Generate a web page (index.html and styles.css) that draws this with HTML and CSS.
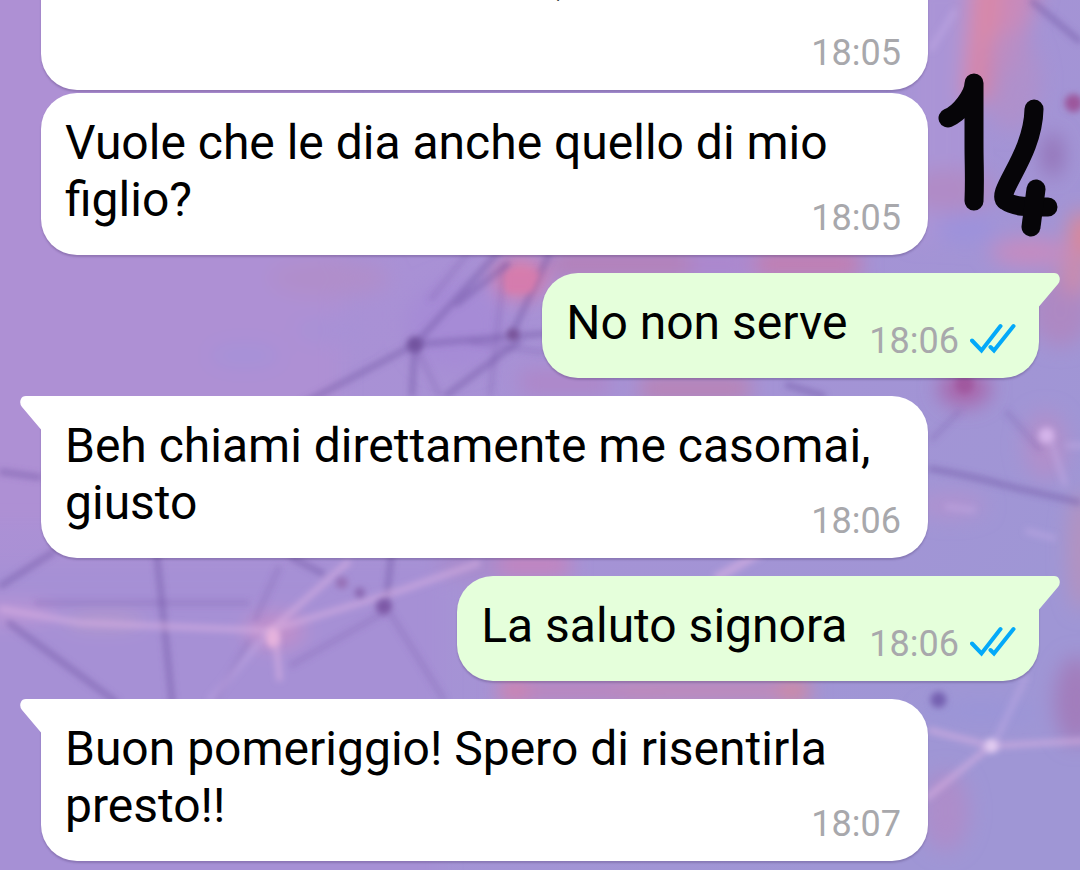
FILE: index.html
```
<!DOCTYPE html>
<html lang="it">
<head>
    <meta charset="UTF-8">
    <meta name="viewport" content="width=device-width, initial-scale=1.0">
    <title>Chat</title>
    <link rel="stylesheet" href="styles.css">
</head>
<body>
    <!-- Sfondo della chat -->
    <svg class="wallpaper" viewBox="0 0 1080 870" preserveAspectRatio="xMidYMid slice" aria-hidden="true">
        <defs>
            <linearGradient id="base" x1="0" y1="0" x2="1" y2="0.6">
                <stop offset="0" stop-color="#ae90d5"/>
                <stop offset="0.5" stop-color="#a891d5"/>
                <stop offset="1" stop-color="#9f96d5"/>
            </linearGradient>
            <filter id="soft" x="-100" y="-100" width="1280" height="1070" filterUnits="userSpaceOnUse">
                <feGaussianBlur stdDeviation="10"/>
            </filter>
            <filter id="lines" x="-20" y="-20" width="1120" height="910" filterUnits="userSpaceOnUse">
                <feGaussianBlur stdDeviation="3"/>
            </filter>
        </defs>
        <rect width="1080" height="870" fill="url(#base)"/>
        <g filter="url(#soft)">
            <path d="M-60 -60h400v580h-400z" fill="#ae90d4"/>
            <rect x="-60" y="565" width="500" height="400" fill="#a690d5"/>
            <path d="M910 -20h60v260h-60z" fill="#aa94d6"/>
            <path d="M972 -30h36l-14 130h-32z" fill="#d888a8"/>
            <path d="M1004 -30h40l-30 100h-20z" fill="#c88abb"/>
            <ellipse cx="987" cy="75" rx="10" ry="26" fill="#ea7890"/>
            <ellipse cx="1010" cy="80" rx="30" ry="50" fill="#b48fc8" opacity="0.7"/>
            <ellipse cx="950" cy="190" rx="45" ry="22" fill="#b08bc6"/>
            <ellipse cx="1052" cy="155" rx="10" ry="22" fill="#9270b4"/>
            <ellipse cx="1030" cy="252" rx="40" ry="14" fill="#c68bc0"/>
            <ellipse cx="1082" cy="235" rx="14" ry="24" fill="#dc8797"/>
            <ellipse cx="965" cy="228" rx="30" ry="14" fill="#9c92dc"/>
            <ellipse cx="330" cy="278" rx="60" ry="18" fill="#b08eca"/>
            <ellipse cx="330" cy="330" rx="35" ry="12" fill="#a791d6"/>
            <ellipse cx="245" cy="355" rx="36" ry="12" fill="#a691d8"/>
            <ellipse cx="520" cy="278" rx="26" ry="20" fill="#dc7da9"/>
            <ellipse cx="455" cy="325" rx="50" ry="45" fill="#a68bd6"/>
            <rect x="550" y="252" width="140" height="24" fill="#b67fb6"/>
            <rect x="690" y="252" width="60" height="24" fill="#ad85cc"/>
            <rect x="755" y="252" width="105" height="24" fill="#c57bad"/>
            <rect x="640" y="376" width="110" height="24" fill="#ba82b4"/>
            <rect x="520" y="370" width="90" height="24" fill="#af86c8"/>
            <ellipse cx="964" cy="388" rx="26" ry="18" fill="#a866ab"/>
            <ellipse cx="1060" cy="310" rx="30" ry="36" fill="#ad88c3"/>
            <ellipse cx="1074" cy="275" rx="14" ry="20" fill="#cb8bac"/>
            <ellipse cx="1045" cy="445" rx="22" ry="34" fill="#b18fcb"/>
            <ellipse cx="950" cy="505" rx="35" ry="12" fill="#b092cf"/>
            <ellipse cx="1080" cy="550" rx="12" ry="60" fill="#b592bd"/>
            <rect x="440" y="552" width="60" height="24" fill="#a98acb"/>
            <rect x="500" y="552" width="70" height="24" fill="#c583bd"/>
            <rect x="500" y="680" width="160" height="20" fill="#bf84ba"/>
            <rect x="620" y="680" width="190" height="20" fill="#c487b5"/>
            <rect x="500" y="680" width="26" height="20" fill="#da7fa5"/>
            <rect x="780" y="680" width="26" height="20" fill="#da8797"/>
            <ellipse cx="1076" cy="700" rx="22" ry="44" fill="#a27dbc"/>
            <ellipse cx="980" cy="712" rx="60" ry="8" fill="#9994d8"/>
            <ellipse cx="275" cy="630" rx="30" ry="18" fill="#c08fca"/>
            <ellipse cx="945" cy="810" rx="24" ry="40" fill="#ad8dca"/>
            <ellipse cx="10" cy="612" rx="50" ry="10" fill="#bb94d5"/>
            <ellipse cx="105" cy="620" rx="40" ry="7" fill="#b79bc9"/>
        </g>
        <g filter="url(#lines)" fill="none" stroke-width="6">
            <g stroke="#6d4fa0" opacity="0.45">
                <path d="M300 405 L415 344 L560 332 M415 344 L500 250 M415 344 L412 396"/>
                <path d="M512 334 L550 252 M455 305 L510 262 M445 396 L520 340"/>
                <path d="M0 471 L42 477 M0 586 L56 550 M157 550 L173 705 M8 621 L118 702"/>
                <path d="M392 550 L386 606 M290 556 L325 574"/>
                <path d="M928 468 Q960 473 1010 486 L1080 502"/>
                <path d="M1030 0 L1080 42"/>
                <path d="M785 384 L825 396"/>
            </g>
            <g stroke="#6d4fa0" opacity="0.22">
                <path d="M430 300 L470 250 M415 344 L440 396 M505 262 L490 396 M470 342 L545 352"/>
                <path d="M384 612 L290 665 M390 612 L445 700 M255 620 L280 565 M35 602 L250 602 M250 640 L215 700"/>
                <path d="M930 440 L960 410 M1005 410 L1040 450"/>
            </g>
            <g stroke="#dcb3e4" opacity="0.55">
                <path d="M0 608 L80 622 L270 630 L350 560 M270 630 L400 590 L480 562"/>
                <path d="M275 630 L280 680"/>
                <path d="M928 729 L990 745 L1085 740 M990 745 L925 798"/>
                <path d="M715 578 L760 552" stroke-width="9"/>
            </g>
            <g stroke="#c9aee8" opacity="0.4">
                <path d="M270 630 L210 700 M995 740 L1026 675 M1050 440 L1065 485"/>
                <path d="M945 506 L975 510 M930 50 L955 10 M1065 445 L1085 445 M1025 530 L1055 538"/>
            </g>
        </g>
        <g filter="url(#lines)">
            <circle cx="415" cy="344" r="8" fill="#72529f"/>
            <circle cx="513" cy="334" r="6" fill="#775196"/>
            <circle cx="384" cy="606" r="8" fill="#7d58a6"/>
            <circle cx="360" cy="592" r="5" fill="#8864ad"/>
            <circle cx="342" cy="582" r="6" fill="#966fb5"/>
            <circle cx="964" cy="384" r="9" fill="#a0589f"/>
            <circle cx="1073" cy="103" r="9" fill="#9c579c"/>
            <circle cx="938" cy="699" r="8" fill="#7560b0"/>
            <circle cx="1046" cy="435" r="8" fill="#d4b4ea"/>
            <circle cx="991" cy="745" r="7" fill="#e2ccf1"/>
            <ellipse cx="273" cy="637" rx="7" ry="10" fill="#e6b3dd"/>
            <path d="M506 272h34l-8 20h-26z" fill="#d57cad"/>
        </g>
    </svg>

    <main class="chat">
        <div class="message in first">
            <p><span class="cut">,</span></p>
            <span class="time">18:05</span>
        </div>

        <div class="message in">
            Vuole che le dia anche quello di mio figlio?
            <span class="time">18:05</span>
        </div>

        <div class="message out tail">
            <svg class="corner" viewBox="0 0 22 34" aria-hidden="true"><path d="M0 0H16Q20 0 21 3Q23 7 20 11L1 33.500H0Z"/></svg>
            No non serve
            <span class="time">18:06
                <svg class="ticks" viewBox="0 0 46 32" role="img" aria-label="Letto"><path d="M2 17.500L11.500 27.500L30.500 3M20.500 24L24 27.500L43.500 3"/></svg>
            </span>
        </div>

        <div class="message in tail">
            <svg class="corner" viewBox="0 0 22 34" aria-hidden="true"><path d="M0 0H16Q20 0 21 3Q23 7 20 11L1 33.500H0Z"/></svg>
            Beh chiami direttamente me casomai, giusto
            <span class="time">18:06</span>
        </div>

        <div class="message out tail">
            <svg class="corner" viewBox="0 0 22 34" aria-hidden="true"><path d="M0 0H16Q20 0 21 3Q23 7 20 11L1 33.500H0Z"/></svg>
            La saluto signora
            <span class="time">18:06
                <svg class="ticks" viewBox="0 0 46 32" role="img" aria-label="Letto"><path d="M2 17.500L11.500 27.500L30.500 3M20.500 24L24 27.500L43.500 3"/></svg>
            </span>
        </div>

        <div class="message in tail">
            <svg class="corner" viewBox="0 0 22 34" aria-hidden="true"><path d="M0 0H16Q20 0 21 3Q23 7 20 11L1 33.500H0Z"/></svg>
            Buon pomeriggio! Spero di risentirla presto!!
            <span class="time">18:07</span>
        </div>
    </main>

    <!-- Numero scritto a mano sopra la chat -->
    <svg class="scribble" viewBox="0 0 120 164" role="img" aria-label="14">
        <path d="M10 45C22 40 36 22 36 10V70C36 95 37 103 36 128"/>
        <path d="M96 36C95 84 56 120 68 128C76 134 90 134 110 134"/>
        <path d="M98 116L93 154"/>
    </svg>
</body>
</html>
```
FILE: styles.css
```
* {
    margin: 0;
    padding: 0;
    box-sizing: border-box;
}

body {
    position: relative;
    min-height: 100vh;
    overflow: hidden;
    background-color: #a891d5;
    color: #000000;
    font-family: Roboto, sans-serif;
    font-size: 48px;
    line-height: 57px;
}

.wallpaper {
    position: absolute;
    top: 0;
    left: 0;
    width: 100%;
    height: 100%;
}

.chat {
    position: relative;
    display: flex;
    flex-direction: column;
    align-items: flex-start;
    padding: 0 41px 10px;
}

.message {
    position: relative;
    display: flow-root;
    margin-top: 3px;
    padding: 21px 24px 16px;
    border-radius: 36px;
    box-shadow: 0 2px 2px rgba(60, 40, 90, 0.25);
}

.in {
    width: calc(100% - 111px);
    padding-right: 27px;
    background-color: #ffffff;
}

.out {
    align-self: flex-end;
    padding-right: 23px;
    background-color: #e5ffdb;
}

.tail {
    margin-top: 18px;
}

.in.tail {
    border-top-left-radius: 0;
}

.out.tail {
    border-top-right-radius: 0;
}

/* conversazione già scorsa verso l'alto */
.first {
    margin-top: -72px;
}

.cut {
    padding-left: 490px;
}

.corner {
    position: absolute;
    top: 0;
    left: 100%;
    width: 22px;
    height: 34px;
    margin-left: -1px;
    fill: #e5ffdb;
}

.in .corner {
    left: auto;
    right: 100%;
    margin-left: 0;
    margin-right: -1px;
    fill: #ffffff;
    transform: scaleX(-1);
}

/* l'orario resta sull'ultima riga, un po' più in basso del testo */
.time {
    float: right;
    display: flex;
    align-items: center;
    gap: 11px;
    margin-top: 26px;
    margin-left: 22px;
    color: #a8a8ac;
    font-size: 36px;
    line-height: 42px;
}

.ticks {
    width: 46px;
    height: 32px;
    margin-bottom: 4px;
    fill: none;
    stroke: #03a9f9;
    stroke-width: 4;
    stroke-linecap: round;
}

.scribble {
    position: absolute;
    top: 73px;
    right: 22px;
    width: 120px;
    height: 164px;
    fill: none;
    stroke: #060508;
    stroke-width: 19;
    stroke-linecap: round;
    stroke-linejoin: round;
}
```
